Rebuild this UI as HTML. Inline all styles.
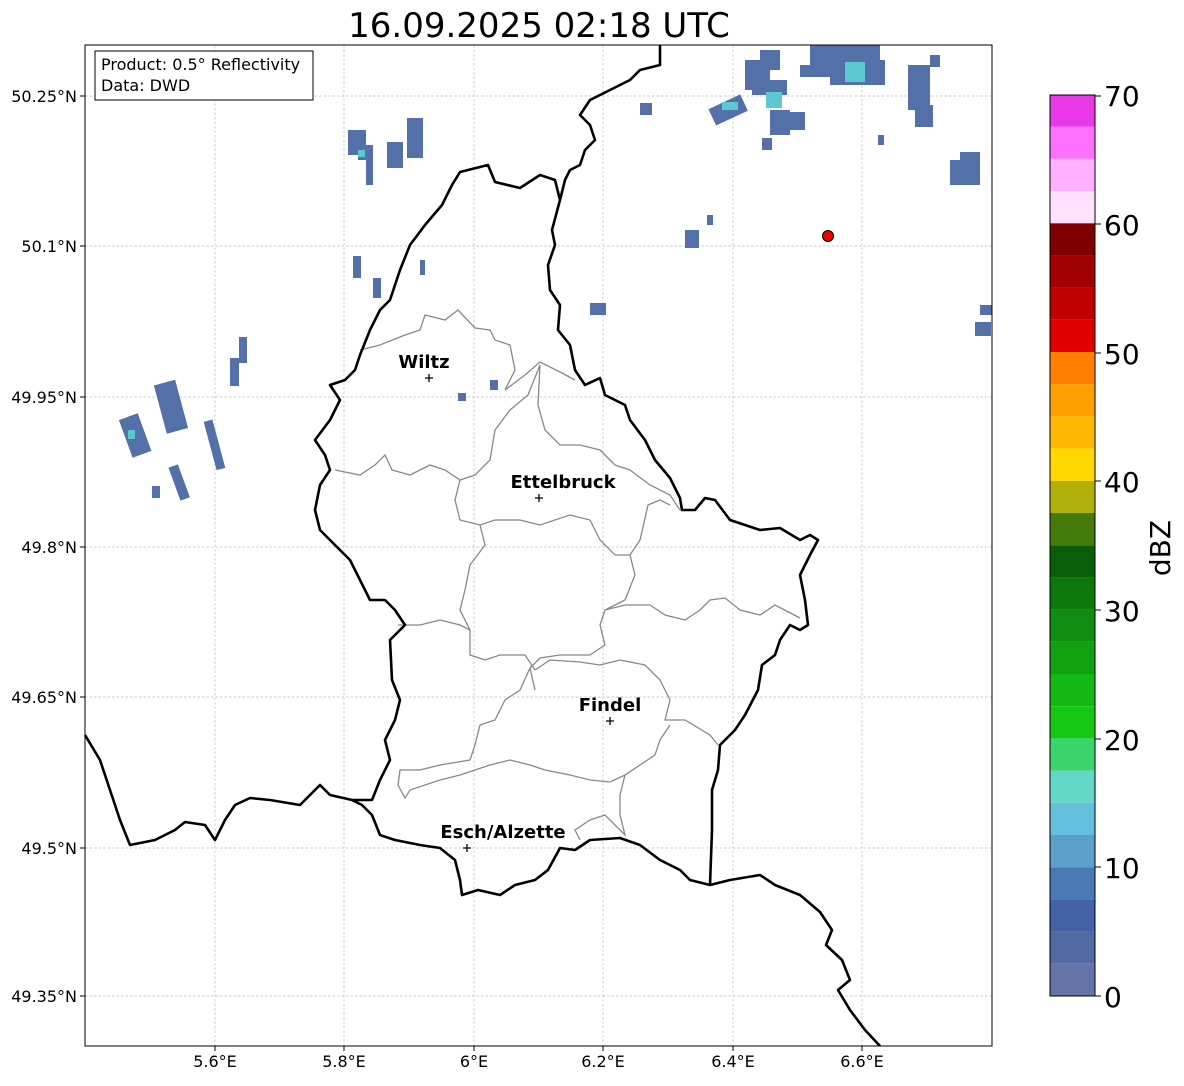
<!DOCTYPE html>
<html><head><meta charset="utf-8"><style>
body{margin:0;background:#fff;font-family:"Liberation Sans","DejaVu Sans",sans-serif}
svg text{font-family:"DejaVu Sans","Liberation Sans",sans-serif}
</style></head><body>
<svg width="1184" height="1081" xmlns="http://www.w3.org/2000/svg">
<rect width="1184" height="1081" fill="#fff"/>
<text x="539" y="37" font-size="34" text-anchor="middle">16.09.2025 02:18 UTC</text>
<g stroke="#bbb" stroke-width="0.7" stroke-dasharray="2.5,2">
<line x1="215" y1="45" x2="215" y2="1046"/><line x1="344" y1="45" x2="344" y2="1046"/>
<line x1="474" y1="45" x2="474" y2="1046"/><line x1="603" y1="45" x2="603" y2="1046"/>
<line x1="733" y1="45" x2="733" y2="1046"/><line x1="862" y1="45" x2="862" y2="1046"/>
<line x1="85" y1="96" x2="992" y2="96"/><line x1="85" y1="246" x2="992" y2="246"/>
<line x1="85" y1="397" x2="992" y2="397"/><line x1="85" y1="547" x2="992" y2="547"/>
<line x1="85" y1="697" x2="992" y2="697"/><line x1="85" y1="848" x2="992" y2="848"/>
<line x1="85" y1="996" x2="992" y2="996"/>
</g>
<g fill="#5370a8">
<rect x="124" y="415" width="20" height="40" transform="rotate(-20 136 432)"/>
<rect x="160" y="382" width="22" height="50" transform="rotate(-15 170 407)"/>
<rect x="174" y="465" width="10" height="35" transform="rotate(-20 179 482)"/>
<rect x="210" y="420" width="9" height="50" transform="rotate(-15 214 445)"/>
<rect x="230" y="358" width="9" height="28"/><rect x="239" y="337" width="8" height="26"/>
<rect x="152" y="486" width="8" height="12"/>
<rect x="348" y="130" width="18" height="25"/><rect x="358" y="145" width="15" height="15"/><rect x="366" y="160" width="7" height="25"/>
<rect x="387" y="142" width="16" height="26"/><rect x="407" y="118" width="16" height="40"/>
<rect x="353" y="256" width="8" height="22"/><rect x="373" y="278" width="8" height="20"/>
<rect x="420" y="260" width="5" height="15"/><rect x="458" y="393" width="8" height="8"/>
<rect x="490" y="380" width="8" height="10"/>
<rect x="640" y="103" width="12" height="12"/><rect x="590" y="303" width="16" height="12"/>
<rect x="685" y="230" width="14" height="18"/><rect x="707" y="215" width="6" height="10"/>
<rect x="710" y="100" width="35" height="18" transform="rotate(-25 730 108)"/>
<rect x="745" y="60" width="25" height="30"/><rect x="760" y="50" width="20" height="20"/><rect x="752" y="80" width="35" height="15"/>
<rect x="810" y="45" width="70" height="20"/><rect x="830" y="60" width="55" height="25"/><rect x="800" y="65" width="30" height="12"/>
<rect x="770" y="110" width="20" height="25"/><rect x="785" y="112" width="20" height="18"/><rect x="762" y="138" width="10" height="12"/>
<rect x="908" y="65" width="22" height="45"/><rect x="915" y="105" width="18" height="22"/><rect x="930" y="55" width="10" height="12"/>
<rect x="950" y="160" width="30" height="25"/><rect x="960" y="152" width="20" height="10"/><rect x="975" y="322" width="16" height="14"/>
<rect x="980" y="305" width="12" height="10"/><rect x="878" y="135" width="6" height="10"/>
</g>
<g fill="#5cc8d0"><rect x="722" y="102" width="16" height="8"/><rect x="766" y="92" width="16" height="16"/><rect x="845" y="62" width="20" height="20"/><rect x="358" y="150" width="7" height="7"/><rect x="128" y="430" width="7" height="9"/></g>
<g fill="none" stroke="#888" stroke-width="1.3">
<path d="M360,350 L380,345 L405,335 L420,330 L425,315 L445,320 L458,310 L475,328 L490,330 L495,340 L510,345 L515,370 L505,390 L525,375 L540,362 L560,372 L575,380"/>
<path d="M335,470 L360,475 L375,465 L385,455 L392,470 L410,475 L430,465 L445,470 L460,480 L475,475 L490,460 L495,430 L510,410 L528,395 L540,365"/>
<path d="M540,365 L538,405 L545,430 L560,445 L580,445 L600,450 L615,465 L630,470 L650,485 L670,495 L680,510"/>
<path d="M460,480 L455,500 L460,520 L480,525 L495,520 L520,520 L540,525 L570,515 L590,520 L600,540 L615,555 L630,555 L640,540 L648,505 L660,500 L670,505"/>
<path d="M480,525 L485,545 L470,565 L465,590 L460,610 L470,630 L470,655 L485,660 L500,655 L525,655 L535,670"/>
<path d="M398,625 L420,625 L440,620 L460,625 L470,630"/>
<path d="M630,555 L635,575 L625,600 L605,610 L600,625 L605,645 L590,655 L560,655 L540,658 L530,668 L535,690"/>
<path d="M605,610 L625,605 L650,605 L665,615 L685,620 L700,610 L710,600 L725,598 L740,610 L760,615 L775,605 L800,618"/>
<path d="M535,670 L550,660 L580,662 L600,665 L620,660 L645,665 L660,680 L670,700 L665,720 L685,720 L710,735 L718,745"/>
<path d="M530,668 L520,690 L505,700 L495,720 L480,725 L475,745 L470,760 L440,765 L420,770 L400,770 L398,785 L405,798 L410,790 L440,780 L460,775 L490,765 L510,760 L530,765 L545,770 L570,775 L590,780 L610,782 L625,775 L640,765 L655,755 L660,740 L670,725"/>
<path d="M625,775 L620,795 L620,815 L625,835 L605,815 L590,820 L575,830 L580,840"/>
</g>
<g fill="none" stroke="#000" stroke-width="2.6" stroke-linejoin="round">
<path d="M442,205 L452,185 L460,172 L488,165 L495,182 L520,188 L540,175 L555,180 L560,200 L552,230 L555,245 L548,265 L550,290 L560,305 L558,330 L570,345 L575,370 L585,385 L600,378 L605,395 L625,405 L630,420 L645,440 L655,460 L670,478 L680,498 L682,510 L695,510 L705,498 L715,500 L730,520 L760,530 L780,528 L800,540 L810,535 L818,540 L810,555 L800,575 L805,600 L808,625 L800,630 L790,625 L780,640 L775,655 L762,665 L758,690 L745,715 L735,730 L720,745 L718,770 L712,790 L712,830 L710,885 L690,880 L680,870 L660,860 L640,845 L620,838 L590,840 L575,850 L560,848 L548,870 L535,880 L515,885 L500,895 L478,890 L462,895 L460,880 L455,860 L440,848 L420,845 L395,840 L380,835 L372,815 L362,805 L352,800 L372,800 L380,780 L390,760 L385,740 L395,720 L400,700 L392,680 L390,640 L405,625 L395,610 L385,600 L370,600 L360,580 L350,560 L335,545 L320,530 L315,510 L320,485 L330,470 L325,455 L315,440 L330,420 L340,400 L330,385 L345,380 L355,370 L360,355 L370,330 L380,310 L390,300 L400,270 L410,245 L425,225 Z"/>
<path d="M710,885 L730,880 L760,875 L775,885 L800,895 L820,912 L832,930 L826,945 L842,960 L850,980 L838,990 L850,1010 L865,1030 L880,1046"/>
<path d="M352,800 L330,795 L320,785 L300,805 L270,800 L250,798 L235,805 L225,820 L215,840 L205,825 L185,822 L175,830 L155,840 L130,845 L120,820 L110,790 L100,760 L85,735"/>
<path d="M560,200 L565,180 L570,170 L580,165 L585,150 L595,140 L590,125 L580,115 L590,100 L610,90 L630,80 L640,70 L660,65 L660,45"/>
</g>
<circle cx="828" cy="236" r="5.5" fill="#e00" stroke="#000" stroke-width="1"/>
<g font-size="18" font-weight="bold" text-anchor="middle">
<text x="424" y="368">Wiltz</text><text x="563" y="488">Ettelbruck</text>
<text x="610" y="711">Findel</text><text x="503" y="838">Esch/Alzette</text>
</g>
<g stroke="#000" stroke-width="1.3">
<path d="M425,378h8M429,374v8"/><path d="M535,498h8M539,494v8"/><path d="M606,721h8M610,717v8"/><path d="M463,848h8M467,844v8"/>
</g>
<rect x="85" y="45" width="907" height="1001" fill="none" stroke="#000" stroke-width="1"/>
<rect x="95" y="51" width="218" height="49" fill="#fff" stroke="#000" stroke-width="1"/>
<text x="101" y="70" font-size="16">Product: 0.5° Reflectivity</text>
<text x="101" y="91" font-size="16">Data: DWD</text>
<g font-size="16" text-anchor="end">
<text x="77" y="102">50.25°N</text><text x="77" y="252">50.1°N</text><text x="77" y="403">49.95°N</text>
<text x="77" y="553">49.8°N</text><text x="77" y="703">49.65°N</text><text x="77" y="854">49.5°N</text><text x="77" y="1002">49.35°N</text>
</g>
<g font-size="16" text-anchor="middle">
<text x="215" y="1067">5.6°E</text><text x="344" y="1067">5.8°E</text><text x="474" y="1067">6°E</text>
<text x="603" y="1067">6.2°E</text><text x="733" y="1067">6.4°E</text><text x="862" y="1067">6.6°E</text>
</g>
<g stroke="#000"><path d="M215,1046v5M344,1046v5M474,1046v5M603,1046v5M733,1046v5M862,1046v5M85,96h-5M85,246h-5M85,397h-5M85,547h-5M85,697h-5M85,848h-5M85,996h-5"/></g>
<g>
<rect x="1050" y="963.8" width="45" height="32.2" fill="#6474a8"/>
<rect x="1050" y="931.6" width="45" height="32.2" fill="#526aa2"/>
<rect x="1050" y="899.4" width="45" height="32.2" fill="#4460a6"/>
<rect x="1050" y="867.2" width="45" height="32.2" fill="#4a7ab4"/>
<rect x="1050" y="835" width="45" height="32.2" fill="#5aa0c8"/>
<rect x="1050" y="802.8" width="45" height="32.2" fill="#64c0dc"/>
<rect x="1050" y="770.6" width="45" height="32.2" fill="#64d8c8"/>
<rect x="1050" y="738.4" width="45" height="32.2" fill="#3cd46c"/>
<rect x="1050" y="706.2" width="45" height="32.2" fill="#14c814"/>
<rect x="1050" y="674" width="45" height="32.2" fill="#14b814"/>
<rect x="1050" y="641.8" width="45" height="32.2" fill="#10a010"/>
<rect x="1050" y="609.6" width="45" height="32.2" fill="#108c10"/>
<rect x="1050" y="577.4" width="45" height="32.2" fill="#0c780c"/>
<rect x="1050" y="545.2" width="45" height="32.2" fill="#0a5e0a"/>
<rect x="1050" y="513" width="45" height="32.2" fill="#447a0a"/>
<rect x="1050" y="480.8" width="45" height="32.2" fill="#b0b00a"/>
<rect x="1050" y="448.6" width="45" height="32.2" fill="#ffd800"/>
<rect x="1050" y="416.4" width="45" height="32.2" fill="#ffb800"/>
<rect x="1050" y="384.2" width="45" height="32.2" fill="#ffa000"/>
<rect x="1050" y="352" width="45" height="32.2" fill="#ff8000"/>
<rect x="1050" y="319.8" width="45" height="32.2" fill="#e00000"/>
<rect x="1050" y="287.6" width="45" height="32.2" fill="#c00000"/>
<rect x="1050" y="255.4" width="45" height="32.2" fill="#a00000"/>
<rect x="1050" y="223.2" width="45" height="32.2" fill="#800000"/>
<rect x="1050" y="191" width="45" height="32.2" fill="#ffe0ff"/>
<rect x="1050" y="158.8" width="45" height="32.2" fill="#ffb0ff"/>
<rect x="1050" y="126.6" width="45" height="32.2" fill="#ff70ff"/>
<rect x="1050" y="95" width="45" height="31.6" fill="#e838e8"/>
<rect x="1050" y="95" width="45" height="901" fill="none" stroke="#000" stroke-width="1"/>
</g>
<g stroke="#000"><path d="M1095,96h6M1095,224h6M1095,353h6M1095,481h6M1095,610h6M1095,739h6M1095,867h6M1095,996h6"/></g>
<g font-size="28">
<text x="1104" y="106">70</text><text x="1104" y="235">60</text><text x="1104" y="364">50</text>
<text x="1104" y="492">40</text><text x="1104" y="621">30</text><text x="1104" y="750">20</text>
<text x="1104" y="878">10</text><text x="1104" y="1007">0</text>
</g>
<text x="1170" y="548" font-size="28" text-anchor="middle" transform="rotate(-90 1170 548)">dBZ</text>
</svg>
</body></html>
